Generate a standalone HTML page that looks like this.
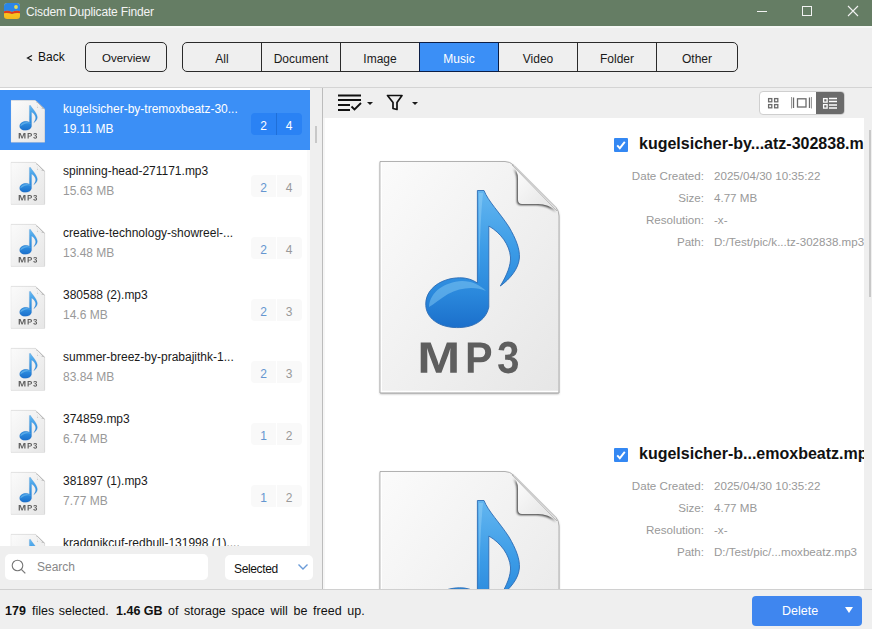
<!DOCTYPE html>
<html><head><meta charset="utf-8">
<style>
*{margin:0;padding:0;box-sizing:border-box}
html,body{width:872px;height:629px;overflow:hidden;background:#efefef;font-family:"Liberation Sans",sans-serif;color:#1a1a1a}
.a{position:absolute}
.t{position:absolute;white-space:nowrap;line-height:1}
#title{left:0;top:0;width:872px;height:26px;background:#657d64}
#tool{left:0;top:26px;width:872px;height:61px;background:#efefef;border-top:2px solid #f6f8f6}
.seg{position:absolute;top:42px;height:30px;border:1px solid #2a2a2a;background:#efefef}
.segi{position:absolute;top:0;height:28px;font-size:12px;line-height:32px;text-align:center;color:#1a1a1a}
.row{position:absolute;left:0;width:310px;height:62px}
.row .nm{position:absolute;left:63px;top:12px;font-size:12px;color:#1a1a1a;white-space:nowrap}
.row .sz{position:absolute;left:63px;top:32px;font-size:12px;color:#999;white-space:nowrap}
.badge{position:absolute;left:251px;top:23px;width:51px;height:22px;border-radius:4px;background:#f9f9f9}
.badge span{position:absolute;top:0;width:25px;height:22px;line-height:26px;text-align:center;font-size:12px}
.lbl{position:absolute;left:560px;width:144px;text-align:right;font-size:11.6px;color:#999;white-space:nowrap}
.val{position:absolute;left:714px;font-size:11.6px;color:#999;white-space:nowrap}
</style></head><body>
<svg width="0" height="0" style="position:absolute">
<defs>
<linearGradient id="ng" x1="0" y1="29" x2="0" y2="167" gradientUnits="userSpaceOnUse"><stop offset="0" stop-color="#63b6f0"/><stop offset="0.45" stop-color="#3a9ae6"/><stop offset="0.75" stop-color="#2a88dc"/><stop offset="1" stop-color="#1b6fcb"/></linearGradient>
<linearGradient id="pg" x1="0" y1="0" x2="1" y2="1"><stop offset="0" stop-color="#fbfbfb"/><stop offset="1" stop-color="#e6e6e6"/></linearGradient>
<linearGradient id="fg" x1="0" y1="0" x2="1" y2="1"><stop offset="0" stop-color="#ffffff"/><stop offset="1" stop-color="#e2e2e2"/></linearGradient>
<filter id="sh" x="-10%" y="-10%" width="120%" height="120%"><feGaussianBlur stdDeviation="1.2"/><feOffset dx="0" dy="1.2"/></filter>
<filter id="fb" x="-30%" y="-30%" width="160%" height="160%"><feGaussianBlur stdDeviation="1.1"/><feOffset dx="-0.8" dy="1"/></filter>
<symbol id="mp3" viewBox="0 0 180 232" preserveAspectRatio="none" style="overflow:visible">
<path d="M0,1.5 H125 Q130,1.5 134,5.5 L176,47.5 Q179,51 179,56 V233 H0 Z" fill="#b0b0b0" filter="url(#sh)"/>
<path d="M0,1.5 H125 Q130,1.5 134,5.5 L176,47.5 Q179,51 179,56 V233 H0 Z" fill="url(#pg)" stroke="#a0a0a0" stroke-width="0.8"/>
<path d="M1.4,3 V231.4 H178" fill="none" stroke="#ffffff" stroke-width="1.2"/>
<g transform="translate(0,1)">
<path d="M132,4 Q138,9 138,18 V39 Q138,43 142,43 H158 Q168,43 177,50 Z" fill="#000" opacity="0.8" filter="url(#fb)"/>
<path d="M132,4 Q138,9 138,18 V39 Q138,43 142,43 H158 Q168,43 177,50 Z" fill="url(#fg)"/>
<path d="M132,4 L177,50" stroke="#b4b4b4" stroke-width="0.9" fill="none"/>
<path d="M97.4,29.5 H104 C108,40 120,52 129,66 C136,78 140,88 139.4,97 C138.5,108 130,118 120.3,125 C127,114 131,104 130.5,96 C129.5,84 121,72 108.8,65 V146 C106,160 92,168 73,166.4 C56,165 45,155 45.8,142 C46.5,127 62,117 79.5,116.8 C87,116.6 93,119 97.4,122 Z" fill="url(#ng)" stroke="#2c6cb4" stroke-width="0.9"/>
<path d="M49,146 C50,131 64,121 82,120 C92,120 100,124 106,130 C96,125 80,126 68,133 C60,138 54,143 49,146 Z" fill="#8fd0f7" opacity="0.45"/>
<path d="M99,32 H103 C100,60 100,90 99,118 Z" fill="#a8dcf8" opacity="0.35"/>
<g fill="#5e5e5e"><path d="M70.2 211.8V193.5Q70.2 192.87 70.21 192.25Q70.22 191.63 70.45 186.92Q68.66 192.68 67.8 194.95L61.4 211.8H56.1L49.7 194.95L47 186.92Q47.3 191.89 47.3 193.5V211.8H40.7V181.6H50.66L57.01 198.49L57.57 200.12L58.78 204.17L60.36 199.33L66.89 181.6H76.8V211.8Z"/><path d="M111.2 191.16Q111.2 194.07 109.95 196.37Q108.7 198.66 106.36 199.92Q104.03 201.17 100.82 201.17H93.76V211.8H87.8V181.6H100.58Q105.69 181.6 108.44 184.1Q111.2 186.59 111.2 191.16ZM105.2 191.27Q105.2 186.51 99.91 186.51H93.76V196.3H100.08Q102.54 196.3 103.87 195.01Q105.2 193.71 105.2 191.27Z"/><path d="M138 203.34Q138 207.67 135.45 210.04Q132.89 212.4 128.18 212.4Q123.72 212.4 121.08 210.11Q118.45 207.83 118 203.51L123.62 202.97Q124.15 207.41 128.16 207.41Q130.14 207.41 131.24 206.32Q132.34 205.22 132.34 202.97Q132.34 200.91 131.01 199.82Q129.67 198.72 127.04 198.72H125.11V193.75H126.92Q129.3 193.75 130.5 192.67Q131.69 191.59 131.69 189.57Q131.69 187.67 130.74 186.59Q129.79 185.5 127.96 185.5Q126.25 185.5 125.2 186.55Q124.15 187.6 123.99 189.53L118.47 189.09Q118.9 185.11 121.44 182.85Q123.97 180.6 128.06 180.6Q132.4 180.6 134.85 182.78Q137.29 184.96 137.29 188.81Q137.29 191.7 135.77 193.56Q134.25 195.42 131.38 196.03V196.12Q134.56 196.53 136.28 198.45Q138 200.36 138 203.34Z"/></g>
</g>
</symbol>
</defs></svg>

<!-- title bar -->
<div id="title" class="a">
  <svg class="a" style="left:3px;top:2px" width="18" height="18" viewBox="0 0 18 18">
    <defs><linearGradient id="ib" x1="0" y1="0" x2="0" y2="1"><stop offset="0" stop-color="#f9df2e"/><stop offset="1" stop-color="#f6b81c"/></linearGradient></defs>
    <rect x="1" y="1" width="16" height="16" rx="3.2" fill="url(#ib)"/>
    <path d="M1,4.2 Q1,1 4.2,1 H13.8 Q17,1 17,4.2 V9.2 Q13,8.2 9,10 Q5,8.2 1,9.2 Z" fill="#2b86e8"/>
    <path d="M1,9.2 Q5,8.2 9,10 Q13,8.2 17,9.2 V11.2 Q13,10.4 9,12 Q5,10.4 1,11.2 Z" fill="#dd3b1e"/>
    <circle cx="13" cy="5" r="1.9" fill="#e6dc55"/>
  </svg>
  <div class="t" style="left:26px;top:6px;font-size:12px;letter-spacing:-0.15px;color:#f4f4f4">Cisdem Duplicate Finder</div>
  <div class="a" style="left:757px;top:11px;width:10px;height:1px;background:#f2f2f2"></div>
  <div class="a" style="left:802px;top:6px;width:10px;height:10px;border:1px solid #f2f2f2"></div>
  <svg class="a" style="left:847px;top:5px" width="12" height="12" viewBox="0 0 12 12"><path d="M1,1 L11,11 M11,1 L1,11" stroke="#f2f2f2" stroke-width="1.1"/></svg>
</div>

<!-- toolbar -->
<div id="tool" class="a"></div>
<div class="a" style="left:0;top:87px;width:872px;height:1px;background:#d4d4d4"></div>
<svg class="a" style="left:26px;top:54px" width="8" height="8" viewBox="0 0 8 8"><path d="M6,1.5 L1.5,4 L6,6.5" fill="none" stroke="#111" stroke-width="1.2"/></svg>
<div class="t" style="left:38px;top:51px;font-size:12px;color:#111">Back</div>
<div class="seg" style="left:85px;width:82px;border-radius:5px"><div class="segi" style="left:0;top:-1px;width:80px;font-size:11.5px;color:#111">Overview</div></div>
<div class="seg" style="left:182px;width:556px;border-radius:5px;overflow:hidden">
  <div class="segi" style="left:0px;width:78px">All</div>
  <div class="segi" style="left:79px;width:78px">Document</div>
  <div class="segi" style="left:158px;width:78px">Image</div>
  <div class="segi" style="left:237px;width:78px;background:#3b8ff6;color:#fff">Music</div>
  <div class="segi" style="left:316px;width:78px">Video</div>
  <div class="segi" style="left:395px;width:78px">Folder</div>
  <div class="segi" style="left:474px;width:80px">Other</div>
  <div class="a" style="left:78px;top:0;width:1px;height:28px;background:#2a2a2a"></div>
  <div class="a" style="left:157px;top:0;width:1px;height:28px;background:#2a2a2a"></div>
  <div class="a" style="left:236px;top:0;width:1px;height:28px;background:#0b1d45"></div>
  <div class="a" style="left:315px;top:0;width:1px;height:28px;background:#0b1d45"></div>
  <div class="a" style="left:394px;top:0;width:1px;height:28px;background:#2a2a2a"></div>
  <div class="a" style="left:473px;top:0;width:1px;height:28px;background:#2a2a2a"></div>
</div>
<div class="a" style="left:419px;top:42px;width:80px;height:30px;border:1px solid #0b1d45"></div>

<!-- left list -->
<div class="a" id="list" style="left:0;top:88px;width:310px;height:458px;background:#fff;overflow:hidden">
<div class="row" style="top:2px;height:60px;background:#3b8ff6">
  <svg class="a" style="left:11px;top:10px;overflow:visible" width="34" height="42"><use href="#mp3" width="34" height="42"/></svg>
  <div class="nm" style="color:#fff">kugelsicher-by-tremoxbeatz-30...</div><div class="sz" style="color:#fff">19.11 MB</div>
  <div class="badge" style="background:#2a82f4"><span style="left:0;color:#fff">2</span><span style="left:25px;border-left:1px solid #1f6fd8;width:25px;color:#fff">4</span></div>
</div>
<div class="row" style="top:64px">
  <svg class="a" style="left:11px;top:10px;overflow:visible" width="34" height="42"><use href="#mp3" width="34" height="42"/></svg>
  <div class="nm">spinning-head-271171.mp3</div><div class="sz">15.63 MB</div>
  <div class="badge"><span style="left:0;color:#6496d0">2</span><span style="left:25px;width:25px;color:#999;border-left:1px solid #fff">4</span></div>
</div>
<div class="row" style="top:126px">
  <svg class="a" style="left:11px;top:10px;overflow:visible" width="34" height="42"><use href="#mp3" width="34" height="42"/></svg>
  <div class="nm">creative-technology-showreel-...</div><div class="sz">13.48 MB</div>
  <div class="badge"><span style="left:0;color:#6496d0">2</span><span style="left:25px;width:25px;color:#999;border-left:1px solid #fff">4</span></div>
</div>
<div class="row" style="top:188px">
  <svg class="a" style="left:11px;top:10px;overflow:visible" width="34" height="42"><use href="#mp3" width="34" height="42"/></svg>
  <div class="nm">380588 (2).mp3</div><div class="sz">14.6 MB</div>
  <div class="badge"><span style="left:0;color:#6496d0">2</span><span style="left:25px;width:25px;color:#999;border-left:1px solid #fff">3</span></div>
</div>
<div class="row" style="top:250px">
  <svg class="a" style="left:11px;top:10px;overflow:visible" width="34" height="42"><use href="#mp3" width="34" height="42"/></svg>
  <div class="nm">summer-breez-by-prabajithk-1...</div><div class="sz">83.84 MB</div>
  <div class="badge"><span style="left:0;color:#6496d0">2</span><span style="left:25px;width:25px;color:#999;border-left:1px solid #fff">3</span></div>
</div>
<div class="row" style="top:312px">
  <svg class="a" style="left:11px;top:10px;overflow:visible" width="34" height="42"><use href="#mp3" width="34" height="42"/></svg>
  <div class="nm">374859.mp3</div><div class="sz">6.74 MB</div>
  <div class="badge"><span style="left:0;color:#6496d0">1</span><span style="left:25px;width:25px;color:#999;border-left:1px solid #fff">2</span></div>
</div>
<div class="row" style="top:374px">
  <svg class="a" style="left:11px;top:10px;overflow:visible" width="34" height="42"><use href="#mp3" width="34" height="42"/></svg>
  <div class="nm">381897 (1).mp3</div><div class="sz">7.77 MB</div>
  <div class="badge"><span style="left:0;color:#6496d0">1</span><span style="left:25px;width:25px;color:#999;border-left:1px solid #fff">2</span></div>
</div>
<div class="row" style="top:436px">
  <svg class="a" style="left:11px;top:10px;overflow:visible" width="34" height="42"><use href="#mp3" width="34" height="42"/></svg>
  <div class="nm">kradgnikcuf-redbull-131998 (1)....</div>
</div>
</div>
<div class="a" style="left:310px;top:88px;width:12px;height:501px;background:#efefef"></div>
<div class="a" style="left:315px;top:126px;width:2px;height:17px;background:#c8c8c8"></div>
<div class="a" style="left:322px;top:88px;width:1px;height:501px;background:#bcbcbc"></div>
<div class="a" style="left:0;top:546px;width:310px;height:43px;background:#efefef"></div>

<!-- right panel -->
<div class="a" style="left:323px;top:88px;width:549px;height:30px;background:#efefef"></div>
<div class="a" id="right" style="left:323px;top:118px;width:541px;height:471px;background:#fff;overflow:hidden">
  <svg class="a" style="left:57px;top:42px;overflow:visible" width="180" height="232"><use href="#mp3" width="180" height="232"/></svg>
  <div class="a" style="left:291px;top:20px;width:14px;height:14px;border-radius:1px;background:#3488f3"></div>
  <svg class="a" style="left:291px;top:20px" width="14" height="14" viewBox="0 0 14 14"><path d="M3.2,7.4 L5.8,10.2 L10.8,3.8" fill="none" stroke="#fff" stroke-width="1.9"/></svg>
  <div class="t" style="left:316px;top:18px;font-size:16px;font-weight:700;color:#111">kugelsicher-by...atz-302838.mp3</div>
  <div class="t lbl" style="left:237px;top:52px">Date Created:</div><div class="t val" style="left:391px;top:52px">2025/04/30 10:35:22</div>
  <div class="t lbl" style="left:237px;top:74px">Size:</div><div class="t val" style="left:391px;top:74px">4.77 MB</div>
  <div class="t lbl" style="left:237px;top:96px">Resolution:</div><div class="t val" style="left:391px;top:96px">-x-</div>
  <div class="t lbl" style="left:237px;top:118px">Path:</div><div class="t val" style="left:391px;top:118px">D:/Test/pic/k...tz-302838.mp3</div>

  <svg class="a" style="left:57px;top:352px;overflow:visible" width="180" height="232"><use href="#mp3" width="180" height="232"/></svg>
  <div class="a" style="left:291px;top:330px;width:14px;height:14px;border-radius:1px;background:#3488f3"></div>
  <svg class="a" style="left:291px;top:330px" width="14" height="14" viewBox="0 0 14 14"><path d="M3.2,7.4 L5.8,10.2 L10.8,3.8" fill="none" stroke="#fff" stroke-width="1.9"/></svg>
  <div class="t" style="left:316px;top:328px;font-size:16px;font-weight:700;color:#111">kugelsicher-b...emoxbeatz.mp3</div>
  <div class="t lbl" style="left:237px;top:362px">Date Created:</div><div class="t val" style="left:391px;top:362px">2025/04/30 10:35:22</div>
  <div class="t lbl" style="left:237px;top:384px">Size:</div><div class="t val" style="left:391px;top:384px">4.77 MB</div>
  <div class="t lbl" style="left:237px;top:406px">Resolution:</div><div class="t val" style="left:391px;top:406px">-x-</div>
  <div class="t lbl" style="left:237px;top:428px">Path:</div><div class="t val" style="left:391px;top:428px">D:/Test/pic/...moxbeatz.mp3</div>
</div>
<div class="a" style="left:864px;top:118px;width:8px;height:471px;background:#efefef"></div>
<div class="a" style="left:323px;top:118px;width:2px;height:471px;background:#f6f6f6"></div>
<div class="a" style="left:307px;top:150px;width:3px;height:396px;background:#fafafa"></div>
<div class="a" style="left:869px;top:130px;width:2px;height:167px;background:#c8c8c8"></div>

<!-- bottom -->
<div class="a" style="left:0;top:589px;width:872px;height:1px;background:#d0d0d0"></div>
<div class="a" style="left:0;top:590px;width:872px;height:39px;background:#efefef"></div>

<!-- right toolbar icons -->
<svg class="a" style="left:336px;top:94px" width="40" height="18" viewBox="0 0 40 18">
  <path d="M2,1.5 H25 M2,6 H25 M2,11 H14 M2,16 H14" stroke="#111" stroke-width="1.8" fill="none"/>
  <path d="M15.5,12.5 L18.5,15.5 L25,9" stroke="#111" stroke-width="1.8" fill="none"/>
  <path d="M31,8 H37 L34,11 Z" fill="#1a1a1a"/>
</svg>
<svg class="a" style="left:386px;top:94px" width="34" height="18" viewBox="0 0 34 18">
  <path d="M1.5,1.5 H16 L11,8.5 V15.5 L7,14.5 V8.5 Z" stroke="#111" stroke-width="1.7" fill="none" stroke-linejoin="round"/>
  <path d="M26,8 H32 L29,11 Z" fill="#1a1a1a"/>
</svg>
<div class="a" style="left:759px;top:91px;width:86px;height:24px;border:1px solid #cfcfcf;border-radius:4px;background:#fff;overflow:hidden">
  <div class="a" style="left:56px;top:-1px;width:30px;height:24px;background:#6b6b6b;border-radius:0 4px 4px 0"></div>
</div>
<svg class="a" style="left:765px;top:95px" width="80" height="16" viewBox="0 0 80 16">
  <g fill="none" stroke="#6b6b6b" stroke-width="1.3">
    <rect x="3.6" y="3.6" width="3.2" height="3.2"/><rect x="9.6" y="3.6" width="3.2" height="3.2"/>
    <rect x="3.6" y="9.6" width="3.2" height="3.2"/><rect x="9.6" y="9.6" width="3.2" height="3.2"/>
    <rect x="32.5" y="3.8" width="8.5" height="8.2"/>
  </g>
  <g stroke="#9a9a9a" stroke-width="1">
    <path d="M26.5,2 V13.5 M46.5,2 V13.5"/>
  </g>
  <g stroke="#6b6b6b" stroke-width="1.3"><path d="M28.5,2.5 V13 M44.5,2.5 V13"/></g>
  <g fill="none" stroke="#fff" stroke-width="1.3">
    <rect x="58.6" y="3.6" width="3.5" height="3.5"/><rect x="58.6" y="9.6" width="3.5" height="3.5"/>
    <path d="M64,3.5 H72 M64,6.5 H72 M64,10 H72 M64,13 H72"/>
  </g>
</svg>

<!-- search area -->
<div class="a" style="left:5px;top:554px;width:203px;height:26px;border-radius:5px;background:#fff"></div>
<svg class="a" style="left:10px;top:558px" width="18" height="18" viewBox="0 0 18 18"><circle cx="7.5" cy="7.5" r="5.3" fill="none" stroke="#777" stroke-width="1.1"/><path d="M11.3,11.3 L15.3,15.3" stroke="#777" stroke-width="1.2"/></svg>
<div class="t" style="left:37px;top:561px;font-size:12px;color:#888">Search</div>
<div class="a" style="left:225px;top:555px;width:88px;height:25px;border-radius:5px;background:#fff"></div>
<div class="t" style="left:234px;top:563px;font-size:12px;letter-spacing:-0.35px;color:#111">Selected</div>
<svg class="a" style="left:297px;top:563px" width="12" height="8" viewBox="0 0 12 8"><path d="M1.5,1.5 L6,6 L10.5,1.5" fill="none" stroke="#6a9bd8" stroke-width="1.4"/></svg>

<!-- bottom bar -->
<div class="t" style="left:5px;top:605px;font-size:12.5px;color:#111;font-weight:700">179</div>
<div class="t" style="left:32px;top:605px;font-size:12.5px;color:#111;word-spacing:1px">files selected.</div>
<div class="t" style="left:116px;top:605px;font-size:12.5px;color:#111;font-weight:700">1.46 GB</div>
<div class="t" style="left:168px;top:605px;font-size:12.5px;color:#111;word-spacing:2.2px">of storage space will be freed up.</div>
<div class="a" style="left:752px;top:596px;width:110px;height:30px;border-radius:4px;background:#3f86ef"></div>
<div class="t" style="left:782px;top:605px;font-size:12.5px;color:#fff">Delete</div>
<svg class="a" style="left:844px;top:605px" width="10" height="10" viewBox="0 0 10 10"><path d="M1,2 H9 L5,8 Z" fill="#fff"/></svg>
</body></html>
